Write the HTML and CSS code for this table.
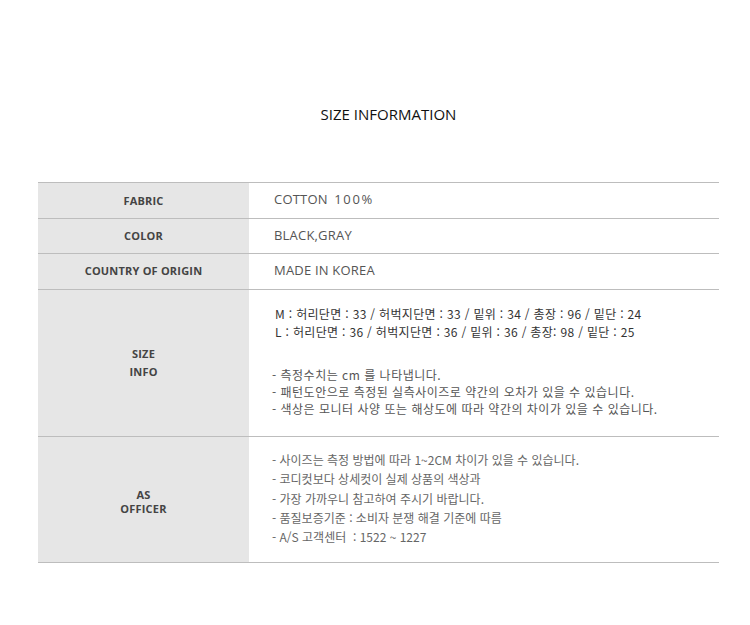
FILE: index.html
```html
<!DOCTYPE html>
<html lang="ko">
<head>
<meta charset="utf-8">
<title>SIZE INFORMATION</title>
<link rel="stylesheet" href="styles.css">
</head>
<body>
<div class="page">
  <h1 class="title">SIZE INFORMATION</h1>
  <div class="table">
    <div class="row r1">
      <div class="label">FABRIC</div>
      <div class="value wide-gap">COTTON <span class="num">100%</span></div>
    </div>
    <div class="row r2">
      <div class="label">COLOR</div>
      <div class="value">BLACK,GRAY</div>
    </div>
    <div class="row r3">
      <div class="label">COUNTRY OF ORIGIN</div>
      <div class="value">MADE IN KOREA</div>
    </div>
    <div class="row r4">
      <div class="label tall">SIZE<br>INFO</div>
      <div class="value ko size">
        <div class="measures">
          <p>M : 허리단면 : 33 / 허벅지단면 : 33 / 밑위 : 34 / 총장 : 96 / 밑단 : 24</p>
          <p>L : 허리단면 : 36 / 허벅지단면 : 36 / 밑위 : 36 / 총장: 98 / 밑단 : 25</p>
        </div>
        <div class="notes">
          <p>- 측정수치는 cm 를 나타냅니다.</p>
          <p>- 패턴도안으로 측정된 실측사이즈로 약간의 오차가 있을 수 있습니다.</p>
          <p>- 색상은 모니터 사양 또는 해상도에 따라 약간의 차이가 있을 수 있습니다.</p>
        </div>
      </div>
    </div>
    <div class="row r5">
      <div class="label short">AS<br>OFFICER</div>
      <div class="value ko as">
        <p>- 사이즈는 측정 방법에 따라 1~2CM 차이가 있을 수 있습니다.</p>
        <p>- 코디컷보다 상세컷이 실제 상품의 색상과</p>
        <p>- 가장 가까우니 참고하여 주시기 바랍니다.</p>
        <p>- 품질보증기준 : 소비자 분쟁 해결 기준에 따름</p>
        <p>- A/S 고객센터 &nbsp;: 1522 ~ 1227</p>
      </div>
    </div>
  </div>
</div>
</body>
</html>
```
FILE: styles.css
```css
* { box-sizing: border-box; }
html, body { margin: 0; padding: 0; background: #fff; }
body {
  font-family: "Open Sans", "Noto Sans", "Noto Sans CJK KR", sans-serif;
  color: #333;
}
.page {
  width: 681px;
  margin-left: 38px;
  padding-top: 104px;
}
.title {
  margin: 0 0 58px;
  font-size: 15px;
  line-height: 20px;
  font-weight: 400;
  color: #111;
  text-align: center;
  padding-left: 20px;
}
.table {
  border-top: 1px solid #bdbdbd;
}
.row {
  display: grid;
  grid-template-columns: 211px 1fr;
  border-bottom: 1px solid #bdbdbd;
}
.r1 { height: 36px; }
.r2 { height: 35px; }
.r3 { height: 36px; }
.r4 { height: 147px; }
.r5 { height: 126px; }
.label {
  background: #e6e6e6;
  display: flex;
  align-items: center;
  justify-content: center;
  text-align: center;
  font-size: 11px;
  font-weight: 700;
  letter-spacing: 0.2px;
  color: #444;
}
.r2 .label, .r3 .label { padding-bottom: 2px; }
.label.tall { line-height: 18px; }
.label.short { line-height: 14px; padding-top: 4px; }
.value {
  display: flex;
  align-items: center;
  padding-left: 25px;
  padding-bottom: 3px;
  font-size: 13px;
  letter-spacing: 0.2px;
  color: #555;
  white-space: pre;
}
.wide-gap { word-spacing: 3px; }
.num { letter-spacing: 1.6px; }
.value.ko {
  display: block;
  font-family: "Noto Sans CJK KR", "Noto Sans", sans-serif;
  font-size: 12px;
  letter-spacing: 0;
  padding-left: 23px;
  padding-bottom: 0;
  white-space: normal;
}
.value p { margin: 0; }
.size { padding-top: 15px; }
.measures { color: #333; line-height: 18px; padding-left: 3px; letter-spacing: 0.33px; }
.notes { color: #555; line-height: 17px; margin-top: 25px; letter-spacing: 0.5px; }
.as { padding-top: 13px; line-height: 19.25px; color: #666; letter-spacing: 0.15px; }
```
